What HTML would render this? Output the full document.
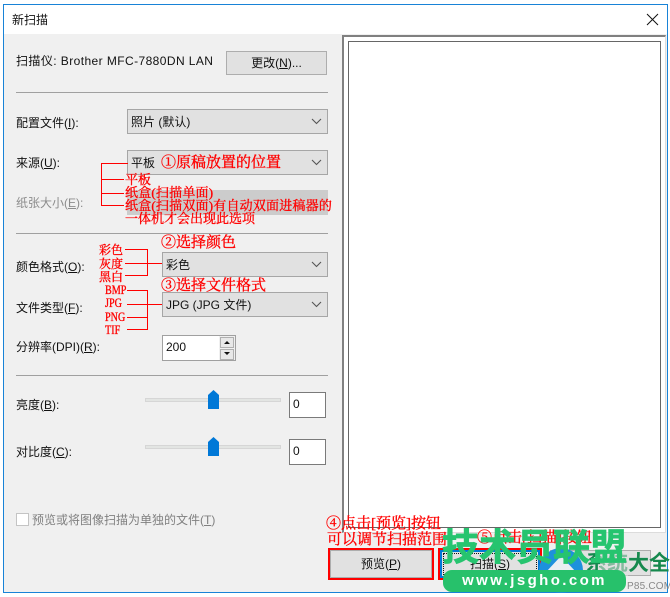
<!DOCTYPE html>
<html lang="zh"><head><meta charset="utf-8"><title>新扫描</title>
<style>
html,body{margin:0;padding:0;background:#fff}
#p{position:relative;width:670px;height:597px;overflow:hidden;background:#fff;font:12px "Liberation Sans","Noto Sans CJK SC",sans-serif;color:#111}
#p div{position:absolute;box-sizing:border-box}
.t{white-space:nowrap;line-height:16px;height:16px}
.hr{left:16px;width:312px;height:1px;background:#a0a0a0}
.sel{background:#e1e1e1;border:1px solid #a6a6a6;padding-left:3px;line-height:24px;white-space:nowrap}
.sel svg{position:absolute;right:5px;top:8px}
.btn{background:#e1e1e1;border:1px solid #adadad;text-align:center;white-space:nowrap}
.inp{background:#fff;border:1px solid #7a7a7a;padding-left:3px;line-height:22px}
.track{left:145px;width:136px;height:4px;background:#e3e5e3;border:1px solid #d6d6d6}
.r{background:#f00}
.n{color:#f00;font-family:"Liberation Serif","Noto Serif CJK SC",serif;font-weight:400;-webkit-text-stroke:.35px #f00;white-space:nowrap;line-height:14px;height:14px}
.s{transform:scaleX(.78);transform-origin:0 50%;font-size:13px}
u{text-decoration:underline}
</style></head><body><div id="p">
<div style="left:3px;top:4px;width:665px;height:589px;background:#f0f0f0;border:1px solid #1883d7"></div>
<div style="left:4px;top:5px;width:663px;height:29px;background:#fff"></div>
<div class="t" style="left:12px;top:12px">新扫描</div>
<svg style="position:absolute;left:646px;top:13px" width="13" height="13" viewBox="0 0 13 13"><path d="M1 1L12 12M12 1L1 12" stroke="#111" stroke-width="1"/></svg>

<div class="t" style="left:16px;top:53px;letter-spacing:.42px">扫描仪: Brother MFC-7880DN LAN</div>
<div class="btn" style="left:226px;top:51px;width:101px;height:24px;line-height:23px">更改(<u>N</u>)...</div>
<div class="hr" style="top:92px"></div>

<div class="t" style="left:16px;top:115px">配置文件(<u>I</u>):</div>
<div class="sel" style="left:127px;top:109px;width:201px;height:25px">照片 (默认)<svg width="11" height="7" viewBox="0 0 11 7"><path d="M1 1L5.5 5.5L10 1" fill="none" stroke="#555" stroke-width="1.1"/></svg></div>

<div class="t" style="left:16px;top:155px">来源(<u>U</u>):</div>
<div class="sel" style="left:127px;top:150px;width:201px;height:25px">平板<svg width="11" height="7" viewBox="0 0 11 7"><path d="M1 1L5.5 5.5L10 1" fill="none" stroke="#555" stroke-width="1.1"/></svg></div>

<div class="t" style="left:16px;top:195px;color:#8c8c8c">纸张大小(<u>E</u>):</div>
<div style="left:127px;top:190px;width:201px;height:25px;background:#ccc"></div>
<div class="hr" style="top:233px"></div>

<div class="t" style="left:16px;top:259px">颜色格式(<u>O</u>):</div>
<div class="sel" style="left:162px;top:252px;width:166px;height:25px">彩色<svg width="11" height="7" viewBox="0 0 11 7"><path d="M1 1L5.5 5.5L10 1" fill="none" stroke="#555" stroke-width="1.1"/></svg></div>

<div class="t" style="left:16px;top:300px">文件类型(<u>F</u>):</div>
<div class="sel" style="left:162px;top:292px;width:166px;height:25px">JPG (JPG 文件)<svg width="11" height="7" viewBox="0 0 11 7"><path d="M1 1L5.5 5.5L10 1" fill="none" stroke="#555" stroke-width="1.1"/></svg></div>

<div class="t" style="left:16px;top:339px">分辨率(DPI)(<u>R</u>):</div>
<div class="inp" style="left:162px;top:335px;width:74px;height:26px;border-color:#a0a0a0;line-height:22px">200</div>
<div style="left:219px;top:336px;width:16px;height:24px;background:#f0f0f0"></div>
<div style="left:220px;top:337px;width:14px;height:11px;background:#e8e8e8;border:1px solid #b0b0b0"></div>
<div style="left:220px;top:349px;width:14px;height:11px;background:#e8e8e8;border:1px solid #b0b0b0"></div>
<svg style="position:absolute;left:223px;top:340px" width="8" height="17" viewBox="0 0 8 17"><path d="M4 1L7 4H1Z M1 12H7L4 15Z" fill="#111"/></svg>
<div class="hr" style="top:375px"></div>

<div class="t" style="left:16px;top:397px">亮度(<u>B</u>):</div>
<div class="track" style="top:398px"></div>
<svg style="position:absolute;left:208px;top:390px" width="11" height="19" viewBox="0 0 11 19"><path d="M0 5L5.5 0L11 5V19H0Z" fill="#0078d7"/></svg>
<div class="inp" style="left:289px;top:392px;width:37px;height:26px">0</div>

<div class="t" style="left:16px;top:444px">对比度(<u>C</u>):</div>
<div class="track" style="top:445px"></div>
<svg style="position:absolute;left:208px;top:437px" width="11" height="19" viewBox="0 0 11 19"><path d="M0 5L5.5 0L11 5V19H0Z" fill="#0078d7"/></svg>
<div class="inp" style="left:289px;top:439px;width:37px;height:26px">0</div>

<div style="left:16px;top:513px;width:13px;height:13px;background:#fff;border:1px solid #c4c4c4"></div>
<div class="t" style="left:32px;top:512px;color:#808080">预览或将图像扫描为单独的文件(<u>T</u>)</div>

<div style="left:342px;top:35px;width:324px;height:498px;background:#fff;border:solid #dcdcdc;border-width:2px 1px 1px 2px;border-top-color:#808080;border-left-color:#808080"></div>
<div style="left:348px;top:41px;width:313px;height:487px;background:#fff;border:1px solid #666"></div>

<!-- annotations: source -->
<div class="r" style="left:101px;top:163px;width:1px;height:43px"></div>
<div class="r" style="left:101px;top:163px;width:27px;height:1px"></div>
<div class="r" style="left:101px;top:179px;width:23px;height:1px"></div>
<div class="r" style="left:101px;top:193px;width:23px;height:1px"></div>
<div class="r" style="left:101px;top:205px;width:23px;height:1px"></div>
<div class="n" style="left:161px;top:156px;font-size:15px">①原稿放置的位置</div>
<div class="n" style="left:125px;top:173px;font-size:13px">平板</div>
<div class="n" style="left:125px;top:186px;font-size:13px;letter-spacing:.2px">纸盒(扫描单面)</div>
<div class="n" style="left:125px;top:199px;font-size:13px;letter-spacing:.2px">纸盒(扫描双面)有自动双面进稿器的</div>
<div class="n" style="left:125px;top:212px;font-size:13px">一体机才会出现此选项</div>

<!-- colour -->
<div class="n" style="left:161px;top:236px;font-size:15px">②选择颜色</div>
<div class="n" style="left:99px;top:243px;font-size:12px">彩色</div>
<div class="n" style="left:99px;top:257px;font-size:12px">灰度</div>
<div class="n" style="left:99px;top:270px;font-size:12px">黑白</div>
<div class="r" style="left:125px;top:249px;width:22px;height:1px"></div>
<div class="r" style="left:125px;top:263px;width:22px;height:1px"></div>
<div class="r" style="left:125px;top:275px;width:22px;height:1px"></div>
<div class="r" style="left:147px;top:249px;width:1px;height:27px"></div>
<div class="r" style="left:147px;top:263px;width:15px;height:1px"></div>

<!-- type -->
<div class="n" style="left:161px;top:279px;font-size:15px">③选择文件格式</div>
<div class="n s" style="left:105px;top:283px">BMP</div>
<div class="n s" style="left:105px;top:296px">JPG</div>
<div class="n s" style="left:105px;top:310px">PNG</div>
<div class="n s" style="left:105px;top:323px">TIF</div>
<div class="r" style="left:127px;top:290px;width:20px;height:1px"></div>
<div class="r" style="left:127px;top:304px;width:20px;height:1px"></div>
<div class="r" style="left:127px;top:317px;width:20px;height:1px"></div>
<div class="r" style="left:127px;top:329px;width:20px;height:1px"></div>
<div class="r" style="left:147px;top:290px;width:1px;height:40px"></div>
<div class="r" style="left:147px;top:304px;width:15px;height:1px"></div>

<!-- preview -->
<div class="n" style="left:326px;top:517px;font-size:15px">④点击[预览]按钮</div>
<div class="n" style="left:327px;top:533px;font-size:15px">可以调节扫描范围</div>
<div class="n" style="left:477px;top:531px;font-size:15px">⑤点击[扫描]按钮</div>

<div class="btn" style="left:328px;top:548px;width:106px;height:32px;border:2px solid #f00;line-height:28px;box-shadow:inset 0 0 0 1px #adadad">预览(<u>P</u>)</div>
<div class="btn" style="left:438px;top:548px;width:104px;height:32px;border:2px solid #f00;line-height:28px;box-shadow:inset 0 0 0 2px #0078d7">扫描(<u>S</u>)</div>
<div style="left:443px;top:553px;width:94px;height:22px;border:1px dotted #111"></div>
<div class="btn" style="left:550px;top:550px;width:101px;height:26px"></div>

<!-- watermark -->
<div style="left:539px;top:548px;width:44px;height:45px;border-radius:50%;background:#1d91dc"></div>
<svg style="position:absolute;left:546px;top:556px" width="30" height="16" viewBox="0 0 30 16"><path d="M15 0L30 16H0Z" fill="#e8eef2"/></svg>
<div class="t" style="left:586px;top:551px;font-size:21px;font-weight:700;color:#16894e;line-height:26px;height:26px">系统大全</div>
<div style="left:600px;top:552px;width:28px;height:24px;background:rgba(225,225,225,.55)"></div>
<div class="t" style="left:627px;top:579px;font-size:10px;color:#888;letter-spacing:.2px">P85.COM</div>
<div class="t" style="left:442px;top:526px;height:44px;font-size:37px;line-height:44px;font-weight:700;color:#26c46f;-webkit-text-stroke:.8px #26c46f">技术员联盟</div>
<div style="left:443px;top:570px;width:183px;height:22px;border-radius:9px;background:#27c16b;color:#fff;font-size:15px;font-weight:700;line-height:21px;text-align:center;letter-spacing:2.4px;white-space:nowrap">www.jsgho.com</div>
</div></body></html>
